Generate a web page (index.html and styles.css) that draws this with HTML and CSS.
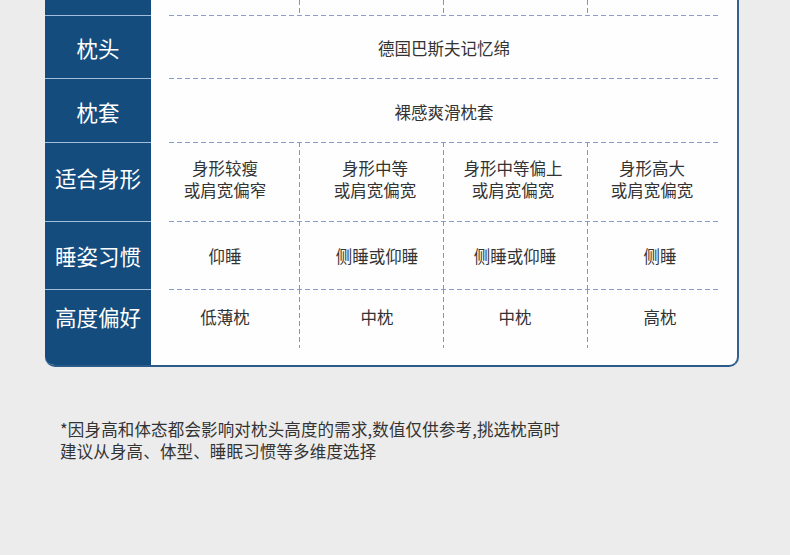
FILE: index.html
```html
<!DOCTYPE html>
<html lang="zh-CN">
<head>
<meta charset="utf-8">
<link rel="stylesheet" href="styles.css">
</head>
<body>
<div class="page">
  <div class="card">
    <div class="row r0">
      <div class="label"></div>
      <div class="cells">
        <div class="cell c1"></div>
        <div class="cell c2 vl"></div>
        <div class="cell c3 vl"></div>
        <div class="cell c4 vl"></div>
      </div>
    </div>
    <div class="row r1">
      <div class="label sep">枕头</div>
      <div class="cells hl">
        <div class="cell full">德国巴斯夫记忆绵</div>
      </div>
    </div>
    <div class="row r2">
      <div class="label sep">枕套</div>
      <div class="cells hl">
        <div class="cell full">裸感爽滑枕套</div>
      </div>
    </div>
    <div class="row r3">
      <div class="label sep">适合身形</div>
      <div class="cells hl">
        <div class="cell c1">身形较瘦<br>或肩宽偏窄</div>
        <div class="cell c2 vl">身形中等<br>或肩宽偏宽</div>
        <div class="cell c3 vl">身形中等偏上<br>或肩宽偏宽</div>
        <div class="cell c4 vl">身形高大<br>或肩宽偏宽</div>
      </div>
    </div>
    <div class="row r4">
      <div class="label sep">睡姿习惯</div>
      <div class="cells hl">
        <div class="cell c1">仰睡</div>
        <div class="cell c2 vl">侧睡或仰睡</div>
        <div class="cell c3 vl">侧睡或仰睡</div>
        <div class="cell c4 vl">侧睡</div>
      </div>
    </div>
    <div class="row r5">
      <div class="label sep">高度偏好</div>
      <div class="cells hl">
        <div class="cell c1">低薄枕</div>
        <div class="cell c2 vl">中枕</div>
        <div class="cell c3 vl">中枕</div>
        <div class="cell c4 vl">高枕</div>
      </div>
    </div>
  </div>
  <p class="note">*因身高和体态都会影响对枕头高度的需求,数值仅供参考,挑选枕高时<br>建议从身高、体型、睡眠习惯等多维度选择</p>
</div>
</body>
</html>
```
FILE: styles.css
```css
html, body {
  margin: 0;
  padding: 0;
  background: #ececec;
}
body {
  font-family: "Noto Sans CJK SC", "Noto Sans", sans-serif;
  width: 790px;
  height: 555px;
  overflow: hidden;
}
.page {
  padding-left: 45px;
}
.card {
  width: 692px;
  background: #fefefe;
  border-right: 2px solid #33628f;
  border-bottom: 2px solid #2b5b8a;
  border-radius: 0 0 10px 10px;
  overflow: hidden;
}
.row {
  display: flex;
}
.label {
  width: 106px;
  flex: none;
  background: #144c7e;
  color: #ffffff;
  font-size: 21.5px;
  display: flex;
  align-items: center;
  justify-content: center;
  box-sizing: border-box;
}
.label.sep {
  border-top: 1px solid #a3bedb;
}
.cells {
  flex: 1;
  display: flex;
  color: #333333;
  font-size: 16.5px;
  line-height: 22px;
}
.cells.hl {
  background: repeating-linear-gradient(90deg, #8c9dca 0 5px, transparent 5px 8px) 18px 0 / 549px 1px no-repeat;
}
.cell {
  display: flex;
  align-items: center;
  justify-content: center;
  text-align: center;
  box-sizing: border-box;
}
.c1 { width: 148px; }
.c2 { width: 144px; padding-left: 12px; }
.c3 { width: 144px; }
.c4 { width: 150px; padding-right: 4px; }
.full { width: 586px; padding-top: 3px; }
.vl {
  background: repeating-linear-gradient(180deg, #8797ad 0 5px, transparent 5px 8px) 0 0 / 1px 100% no-repeat;
}
.r0 { height: 15px; }
.r0 .cell { height: 13px; }
.r1 { height: 63px; }
.r1 .label { padding-top: 1px; }
.r2 { height: 64px; }
.r2 .label { padding-top: 1px; }
.r3 { height: 79px; }
.r3 .label { padding-bottom: 10px; }
.r3 .cell { padding-bottom: 5px; }
.r3 .c2 { padding-left: 8px; }
.r3 .c3 { padding-right: 4px; }
.r3 .c4 { padding-right: 20px; }
.r4 { height: 68px; }
.r4 .cell { padding-top: 1px; }
.r5 { height: 76px; }
.r5 .label { padding-bottom: 23px; }
.r5 .cells { align-items: flex-start; }
.r5 .cell { height: 59px; padding-bottom: 3px; }
.note {
  margin: 51px 0 0 15px;
  color: #333333;
  font-size: 16.5px;
  line-height: 22px;
  letter-spacing: 0.15px;
}
```
